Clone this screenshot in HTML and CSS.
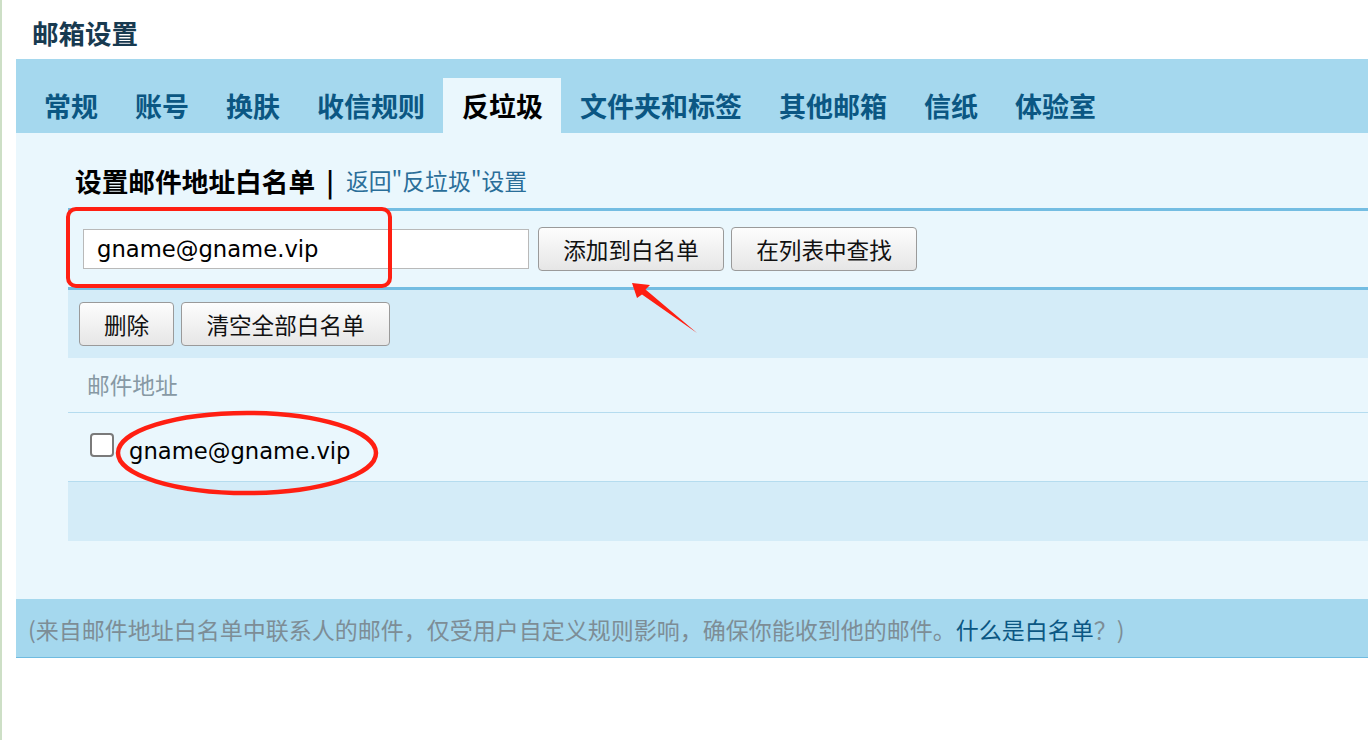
FILE: index.html
```html
<!DOCTYPE html>
<html lang="zh-CN">
<head>
    <meta charset="UTF-8">
    <meta name="viewport" content="width=device-width, initial-scale=1.0">
    <title>邮箱设置</title>
    <link rel="stylesheet" href="styles.css">
</head>
<body>
    <div class="page">
        <h1 class="page-title">邮箱设置</h1>

        <div class="tabs">
            <a class="tab">常规</a>
            <a class="tab">账号</a>
            <a class="tab">换肤</a>
            <a class="tab">收信规则</a>
            <a class="tab active">反垃圾</a>
            <a class="tab">文件夹和标签</a>
            <a class="tab">其他邮箱</a>
            <a class="tab">信纸</a>
            <a class="tab">体验室</a>
        </div>

        <div class="content">
            <div class="section">
                <div class="section-head">
                    <span class="section-title">设置邮件地址白名单</span>
                    <span class="sep">|</span>
                    <a class="back-link">返回"反垃圾"设置</a>
                </div>

                <div class="add-row">
                    <input class="addr-input" type="text" value="gname@gname.vip">
                    <button class="btn btn-wide">添加到白名单</button>
                    <button class="btn btn-wide">在列表中查找</button>
                </div>

                <div class="toolbar">
                    <button class="btn btn-small">删除</button>
                    <button class="btn btn-clear">清空全部白名单</button>
                </div>

                <div class="list-head">邮件地址</div>

                <div class="list-row">
                    <span class="check"></span>
                    <span class="addr">gname@gname.vip</span>
                </div>

                <div class="list-foot"></div>
            </div>
        </div>

        <div class="note">
            (来自邮件地址白名单中联系人的邮件，仅受用户自定义规则影响，确保你能收到他的邮件。<a class="note-link">什么是白名单</a>？)
        </div>
    </div>

    <!-- red marks drawn on top of the screenshot -->
    <svg class="marks" width="1368" height="740" viewBox="0 0 1368 740">
        <rect x="68" y="209" width="322" height="77" rx="8" ry="8" fill="none" stroke="#ff1f12" stroke-width="4"/>
        <ellipse cx="247" cy="453" rx="129" ry="40" fill="none" stroke="#ff1f12" stroke-width="4.5"/>
        <polygon points="632,283 650,285 645.5,289.5 697,333 642,294.5 637,298" fill="#ff1f12"/>
    </svg>
</body>
</html>
```

FILE: styles.css
```css
body {
    margin: 0;
    padding: 0;
    background: #fff;
    font-family: "Noto Sans CJK SC", "Noto Sans", sans-serif;
    color: #000;
    overflow: hidden;
}

.page {
    border-left: 2px solid #cddfc6;
    padding-left: 14px;
    height: 740px;
    box-sizing: border-box;
}

.page-title {
    margin: 0;
    height: 59px;
    line-height: 66px;
    padding-left: 16px;
    font-size: 26.5px;
    font-weight: bold;
    color: #183a50;
}

.tabs {
    display: flex;
    align-items: flex-end;
    height: 74px;
    padding-left: 9px;
    background: #a5d8ee;
}

.tab {
    display: block;
    height: 55px;
    line-height: 55px;
    padding: 0 18px 0 19px;
    font-size: 27px;
    font-weight: bold;
    color: #0b5783;
    white-space: nowrap;
}

.tab.active {
    background: #eaf7fd;
    color: #000;
}

.content {
    background: #eaf7fd;
    padding: 0 0 58px 52px;
}

.section-head {
    height: 75px;
    box-sizing: border-box;
    display: flex;
    align-items: flex-end;
    padding: 0 0 12px 7px;
    white-space: nowrap;
}

.section-title {
    font-size: 26.7px;
    font-weight: bold;
    line-height: 30px;
}

.sep {
    font-size: 26px;
    font-weight: bold;
    line-height: 30px;
    margin: 0 12px 0 11px;
}

.back-link {
    font-size: 22.8px;
    line-height: 30px;
    color: #2a6e99;
}

.add-row {
    height: 82px;
    box-sizing: border-box;
    border-top: 3px solid #74bde2;
    border-bottom: 3px solid #74bde2;
    display: flex;
    align-items: center;
    padding-left: 15px;
    gap: 7px;
}

.addr-input {
    width: 446px;
    height: 40px;
    box-sizing: border-box;
    border: 1px solid #b9b9b9;
    background: #fff;
    padding: 0 0 0 13px;
    font-family: "DejaVu Sans", sans-serif;
    font-size: 22.7px;
    color: #000;
    margin-right: 2px;
    outline: none;
}

.btn {
    height: 44px;
    box-sizing: border-box;
    border: 1px solid #9a9a9a;
    border-radius: 4px;
    background: linear-gradient(#fdfdfd, #e6e6e6);
    font-family: "Noto Sans CJK SC", sans-serif;
    font-size: 22.6px;
    color: #111;
    padding: 0;
}

.btn-wide {
    width: 186px;
}

.toolbar {
    height: 68px;
    background: #d4ecf8;
    display: flex;
    align-items: center;
    padding-left: 11px;
    gap: 7px;
}

.btn-small {
    width: 95px;
}

.btn-clear {
    width: 209px;
}

.list-head {
    height: 55px;
    box-sizing: border-box;
    line-height: 54px;
    padding-left: 19px;
    border-bottom: 1px solid #b5dcef;
    font-size: 22.7px;
    color: #8799a4;
}

.list-row {
    height: 69px;
    box-sizing: border-box;
    border-bottom: 1px solid #b5dcef;
    display: flex;
    align-items: center;
    padding: 8px 0 0 22px;
}

.check {
    width: 24px;
    height: 24px;
    box-sizing: border-box;
    border: 2px solid #7a7a7a;
    border-radius: 4px;
    background: #fff;
    margin: 0 15px 12px 0;
}

.addr {
    font-family: "DejaVu Sans", sans-serif;
    font-size: 22.7px;
    color: #000;
}

.list-foot {
    height: 59px;
    background: #d4ecf8;
}

.note {
    height: 59px;
    box-sizing: border-box;
    background: #a5d8ee;
    border-bottom: 1px solid #6fbbe0;
    line-height: 60px;
    padding-left: 12px;
    font-size: 23px;
    color: #7d8d96;
    white-space: nowrap;
}

.note-link {
    color: #0b5783;
}

.marks {
    position: absolute;
    top: 0;
    left: 0;
    pointer-events: none;
}
```
